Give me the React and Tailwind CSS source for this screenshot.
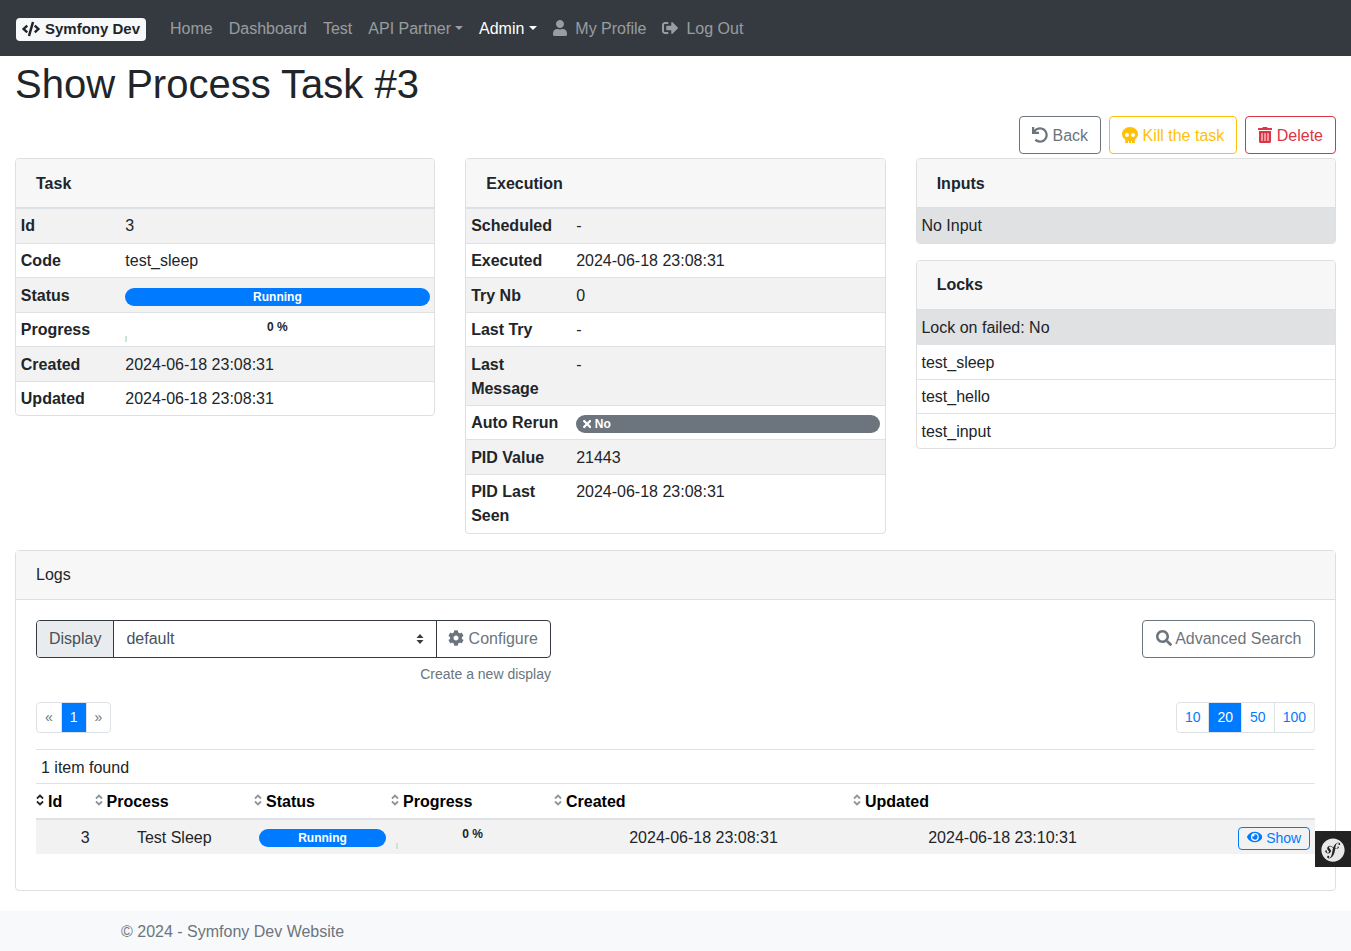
import React from "react";
import {
  FaCode,
  FaCog,
  FaEye,
  FaSearch,
  FaSkull,
  FaSymfony,
  FaTimes,
  FaTrashAlt,
  FaUndo,
  FaUser,
} from "react-icons/fa";

const iconClass = "inline size-[1em] align-[-0.125em]";
const cellClass = "border-t border-[#dee2e6] px-[4.8px] pt-[5.4px] pb-[4.2px] align-top";
const bodyCell = "px-[4.8px] pt-[4.8px] pb-[5.8px] align-top";
const bodyText = "px-[4.8px] pt-[5.8px] pb-[4.8px] align-top";

const Caret = ({ wide }) => (
  <span
    className={`inline-block align-[4px] border-x-[4.8px] border-t-[4.8px] border-x-transparent border-t-current ${
      wide ? "ml-[5px]" : "ml-[4px]"
    }`}
  />
);

const SortIcon = ({ dark }) => (
  <svg
    viewBox="0 0 8 12"
    className={`absolute left-0 top-[10px] h-3 w-2 ${dark ? "text-[#212529]" : "text-[#8f959a]"}`}
    fill="none"
    stroke="currentColor"
    strokeWidth="1.8"
  >
    <path d="M1 4.5 4 1.5 7 4.5" />
    <path d="M1 7.5 4 10.5 7 7.5" />
  </svg>
);

const Badge = ({ color, children }) => (
  <div className={`mt-1 h-[18px] rounded-full text-[12px] font-bold leading-[18px] text-white ${color}`}>
    {children}
  </div>
);

const Progress = () => (
  <div className="h-6">
    <div className="pt-[3px] text-center text-[12px] font-bold leading-[12px]">0 %</div>
    <div className="mt-[3px] h-[6px] w-[2px] bg-[#c8e6d0]" />
  </div>
);

const Card = ({ title, children }) => (
  <div className="overflow-hidden rounded border border-[#dfdfdf]">
    <div className="border-b border-[#dfdfdf] bg-[#f7f7f7] px-5 pt-[12.5px] pb-[11.5px] font-bold">{title}</div>
    {children}
  </div>
);

const InfoTable = ({ rows, labelWidth }) => (
  <table className="w-full table-fixed">
    <tbody>
      {rows.map((row, index) => (
        <tr key={index} className={index % 2 === 0 ? "bg-[#f2f2f2]" : ""}>
          <th className={`${cellClass} text-left font-bold ${labelWidth}`}>{row[0]}</th>
          <td className={cellClass}>{row[1]}</td>
        </tr>
      ))}
    </tbody>
  </table>
);

const SimpleRows = ({ rows }) => (
  <table className="w-full">
    <tbody>
      {rows.map((row, index) => (
        <tr key={row} className={index === 0 ? "bg-[#e0e1e3]" : ""}>
          <td className={cellClass}>{row}</td>
        </tr>
      ))}
    </tbody>
  </table>
);

const navLinks = [
  { label: "Home" },
  { label: "Dashboard" },
  { label: "Test" },
  { label: "API Partner", caret: true },
  { label: "Admin", caret: true, active: true },
];

const taskRows = [
  ["Id", "3"],
  ["Code", "test_sleep"],
  ["Status", <Badge color="bg-[#007bff] text-center">Running</Badge>],
  ["Progress", <Progress />],
  ["Created", "2024-06-18 23:08:31"],
  ["Updated", "2024-06-18 23:08:31"],
];

const executionRows = [
  ["Scheduled", "-"],
  ["Executed", "2024-06-18 23:08:31"],
  ["Try Nb", "0"],
  ["Last Try", "-"],
  ["Last Message", "-"],
  [
    "Auto Rerun",
    <Badge color="bg-[#6c757d] px-[7px]">
      <FaTimes className="inline h-[1em] w-[0.6875em] align-[-0.125em]" /> No
    </Badge>,
  ],
  ["PID Value", "21443"],
  ["PID Last Seen", "2024-06-18 23:08:31"],
];

const columns = [
  { label: "Id", width: "w-[58.5px]", dark: true },
  { label: "Process", width: "w-[159.5px]" },
  { label: "Status", width: "w-[137px]" },
  { label: "Progress", width: "w-[163px]" },
  { label: "Created", width: "w-[299px]" },
  { label: "Updated", width: "w-[299px]" },
  { label: "", width: "" },
];

const pageLink = "-ml-px h-[31px] border border-[#dee2e6] px-2 text-[14px] leading-[29px]";

export default function App() {
  return (
    <div className="relative font-['Liberation_Sans',sans-serif] text-base leading-6 text-[#212529]">
      {/* navbar */}
      <nav className="flex h-14 items-center bg-[#343a40] px-4">
        <div className="mr-4 mt-[2px] flex h-[23px] w-[130px] items-center gap-[5px] whitespace-nowrap rounded bg-[#f8f9fa] px-[6px] text-[15px] font-bold">
          <FaCode className="size-[18px] shrink-0" />
          <span>Symfony Dev</span>
        </div>
        {navLinks.map((link) => (
          <span key={link.label} className={`px-2 pt-[2px] ${link.active ? "text-white" : "text-white/50"}`}>
            {link.label}
            {link.caret && <Caret wide={link.active} />}
          </span>
        ))}
        <span className="px-2 pt-[2px] text-white/50">
          <FaUser className="inline h-[1em] w-[0.875em] align-[-0.125em]" /> <span className="ml-[3.5px]">My Profile</span>
        </span>
        <span className="px-2 pt-[2px] text-white/50">
          <svg viewBox="0 0 512 512" className={iconClass} fill="currentColor">
            <path d="M190 64H96C43 64 0 107 0 160v192c0 53 43 96 96 96h94c7 0 12-5 12-12v-40c0-7-5-12-12-12H96c-18 0-32-14-32-32V160c0-18 14-32 32-32h94c7 0 12-5 12-12V76c0-7-5-12-12-12z" />
            <path d="M505 273 337 441c-15 15-41 4-41-17v-96H160c-13 0-24-11-24-24v-96c0-13 11-24 24-24h136V88c0-21 26-32 41-17l168 168c9 9 9 25 0 34z" />
          </svg>{" "}
          <span className="ml-[3.5px]">Log Out</span>
        </span>
      </nav>

      {/* page */}
      <div className="px-[15px] pt-1">
        <h1 className="mb-2 text-[40px] font-normal leading-[48px]">Show Process Task #3</h1>

        <div className="mb-1 flex justify-end gap-2">
          <button className="h-[38px] rounded border border-[#6c757d] px-3 pt-[2px] text-[#6c757d]">
            <FaUndo className={iconClass} /> Back
          </button>
          <button className="h-[38px] rounded border border-[#ffc107] px-3 pt-[2px] text-[#ffc107]">
            <FaSkull className={iconClass} /> Kill the task
          </button>
          <button className="h-[38px] rounded border border-[#dc3545] px-3 pt-[2px] text-[#dc3545]">
            <FaTrashAlt className="inline h-[1em] w-[0.875em] align-[-0.125em]" /> Delete
          </button>
        </div>

        <div className="mb-4 grid grid-cols-3 items-start gap-x-[30px]">
          <Card title="Task">
            <InfoTable rows={taskRows} labelWidth="w-[104.5px]" />
          </Card>
          <Card title="Execution">
            <InfoTable rows={executionRows} labelWidth="w-[105px]" />
          </Card>
          <div className="flex flex-col gap-4">
            <Card title="Inputs">
              <SimpleRows rows={["No Input"]} />
            </Card>
            <Card title="Locks">
              <SimpleRows rows={["Lock on failed: No", "test_sleep", "test_hello", "test_input"]} />
            </Card>
          </div>
        </div>

        {/* logs */}
        <div className="rounded border border-[#dfdfdf]">
          <div className="border-b border-[#dfdfdf] bg-[#f7f7f7] px-5 py-3">Logs</div>
          <div className="p-5">
            <div className="flex items-start justify-between">
              <div className="w-[515px]">
                <div className="flex h-[38px] overflow-hidden rounded border border-[#343a40]">
                  <div className="border-r border-[#343a40] bg-[#e9ecef] px-3 leading-[36px] text-[#495057]">Display</div>
                  <div className="flex flex-1 items-center justify-between pl-3 pr-3 text-[#495057]">
                    default
                    <svg viewBox="0 0 8 12" className="h-3 w-2 text-[#343a40]" fill="currentColor">
                      <path d="M4 1 7.5 5H.5z" />
                      <path d="M4 11 .5 7h7z" />
                    </svg>
                  </div>
                  <div className="border-l border-[#343a40] pl-[11px] pr-3 leading-[36px] text-[#6c757d]">
                    <FaCog className={iconClass} /> Configure
                  </div>
                </div>
                <div className="mt-[6px] text-right text-[14px] leading-[21px] text-[#6c757d]">Create a new display</div>
              </div>
              <button className="h-[38px] w-[173px] rounded border border-[#6c757d] text-[#6c757d]">
                <FaSearch className={iconClass} /> Advanced Search
              </button>
            </div>

            <div className="mt-[17px] flex justify-between pl-px">
              <div className="flex">
                <span className={`${pageLink} rounded-l text-[#6c757d]`}>«</span>
                <span className={`${pageLink} border-[#007bff] bg-[#007bff] text-white`}>1</span>
                <span className={`${pageLink} rounded-r text-[#6c757d]`}>»</span>
              </div>
              <div className="flex">
                <span className={`${pageLink} rounded-l text-[#007bff]`}>10</span>
                <span className={`${pageLink} border-[#007bff] bg-[#007bff] text-white`}>20</span>
                <span className={`${pageLink} text-[#007bff]`}>50</span>
                <span className={`${pageLink} rounded-r text-[#007bff]`}>100</span>
              </div>
            </div>

            <div className="mt-4 border-t border-[#dee2e6] px-[5px] pt-[6.3px] pb-[3.3px]">1 item found</div>

            <table className="mb-4 w-full table-fixed">
              <thead>
                <tr>
                  {columns.map((col) => (
                    <th
                      key={col.label}
                      className={`relative border-t border-b-2 border-[#dee2e6] pt-[5.8px] pb-[3.8px] pl-3 text-left font-bold text-black ${col.width}`}
                    >
                      {col.label && <SortIcon dark={col.dark} />}
                      {col.label}
                    </th>
                  ))}
                </tr>
              </thead>
              <tbody>
                <tr className="bg-[#f2f2f2]">
                  <td className={`${bodyText} text-right`}>3</td>
                  <td className={`${bodyText} text-center`}>Test Sleep</td>
                  <td className={bodyCell}>
                    <Badge color="bg-[#007bff] text-center">Running</Badge>
                  </td>
                  <td className={bodyCell}>
                    <Progress />
                  </td>
                  <td className={`${bodyText} text-center`}>2024-06-18 23:08:31</td>
                  <td className={`${bodyText} text-center`}>2024-06-18 23:10:31</td>
                  <td className={bodyCell}>
                    <button className="-mb-px ml-auto mt-[2px] block h-[23px] rounded border border-[#007bff] px-2 text-[14px] leading-[21px] text-[#007bff]">
                      <FaEye className="inline h-[1em] w-[1.125em] align-[-0.125em]" /> Show
                    </button>
                  </td>
                </tr>
              </tbody>
            </table>
          </div>
        </div>
      </div>

      <footer className="mt-5 h-10 bg-[#f8f9fa] pl-[121px] pt-[9px] leading-6 text-[#6c757d]">© 2024 - Symfony Dev Website</footer>

      {/* symfony toolbar button */}
      <div className="absolute right-0 top-[831px] flex size-9 items-center justify-center bg-[#222]">
        <FaSymfony className="mt-[2px] size-6 text-[#e8e8e8]" />
      </div>
    </div>
  );
}
